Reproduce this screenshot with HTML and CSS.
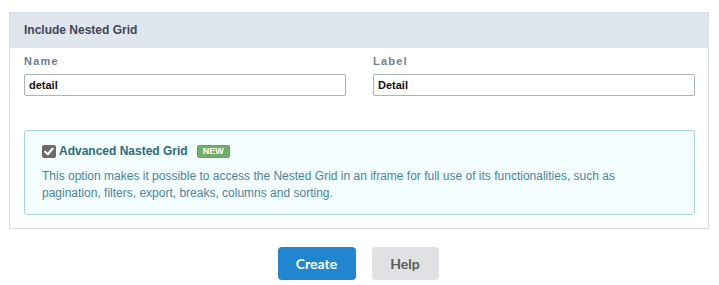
FILE: index.html
```html
<!DOCTYPE html>
<html>
<head>
<meta charset="utf-8">
<link rel="stylesheet" href="styles.css">
</head>
<body>
<div class="panel">
  <div class="panel-head">Include Nested Grid</div>
  <div class="panel-body">
    <div class="fields">
      <div class="field">
        <label class="field-label">Name</label>
        <input class="field-input" type="text" value="detail">
      </div>
      <div class="field">
        <label class="field-label">Label</label>
        <input class="field-input" type="text" value="Detail">
      </div>
    </div>
    <div class="info">
      <div class="info-title">
        <span class="check"><svg width="14" height="13" viewBox="0 0 14 13"><path d="M3.2 6.8 L5.8 9.3 L10.6 3.6" fill="none" stroke="#fff" stroke-width="2.2" stroke-linecap="round" stroke-linejoin="round"/></svg></span>
        <span class="info-name">Advanced Nasted Grid</span>
        <span class="badge">NEW</span>
      </div>
      <p class="info-text">This option makes it possible to access the Nested Grid in an iframe for full use of its functionalities, such as pagination, filters, export, breaks, columns and sorting.</p>
    </div>
  </div>
</div>
<div class="actions">
  <button class="btn btn-primary">Create</button>
  <button class="btn btn-secondary">Help</button>
</div>
</body>
</html>
```
FILE: styles.css
```css
body {
  margin: 0;
  padding: 12px 10px 0 9px;
  font-family: "Liberation Sans", Arial, sans-serif;
  background: #fff;
}
.panel {
  width: 698px;
  border: 1px solid #d5dde3;
}
.panel-head {
  height: 35px;
  background: #e0e6ed;
  color: #3f4755;
  font-size: 12px;
  font-weight: bold;
  line-height: 35px;
  padding-left: 14px;
}
.panel-body {
  padding: 6px 13px 13px 14px;
}
.fields {
  display: grid;
  grid-template-columns: 322px 322px;
  column-gap: 27px;
}
.field {
  display: flex;
  flex-direction: column;
}
.field-label {
  font-size: 11px;
  font-weight: bold;
  letter-spacing: 1.2px;
  color: #6f8091;
  height: 14px;
  line-height: 14px;
  margin-bottom: 6px;
}
.field-input {
  box-sizing: border-box;
  width: 322px;
  height: 22px;
  border: 1px solid #a9b3bf;
  border-radius: 2px;
  padding: 0 4px;
  font-family: "Liberation Sans", Arial, sans-serif;
  font-size: 11px;
  font-weight: bold;
  color: #111;
  margin: 0;
}
.info {
  margin-top: 34px;
  box-sizing: border-box;
  height: 85px;
  border: 1px solid #a7d6df;
  border-radius: 3px;
  background: #f4fdfe;
  padding: 12px 50px 0 17px;
}
.info-title {
  display: flex;
  align-items: center;
  height: 16px;
}
.check {
  width: 14px;
  height: 13px;
  background: #6b6b6b;
  border-radius: 2px;
  display: inline-flex;
  margin-right: 3px;
}
.info-name {
  font-size: 12px;
  font-weight: bold;
  color: #2f6a7d;
}
.badge {
  margin-left: 9px;
  background: #6faf6a;
  border: 1px solid #65a35f;
  border-radius: 2px;
  color: #fff;
  font-size: 9px;
  font-weight: bold;
  height: 11px;
  line-height: 11px;
  padding: 0 5px;
}
.info-text {
  margin: 9px 0 0 0;
  font-size: 12px;
  line-height: 17px;
  color: #4a8597;
}
.actions {
  display: flex;
  justify-content: center;
  gap: 16px;
  margin-top: 18px;
  padding-right: 2px;
}
.btn {
  height: 33px;
  border: none;
  border-radius: 4px;
  font-family: Lato, "Liberation Sans", sans-serif;
  font-size: 14px;
  font-weight: bold;
  padding: 0;
}
.btn-primary {
  width: 78px;
  background: #2185d0;
  color: #fff;
}
.btn-secondary {
  width: 67px;
  background: #e0e1e2;
  color: #5a5a5a;
}
```
